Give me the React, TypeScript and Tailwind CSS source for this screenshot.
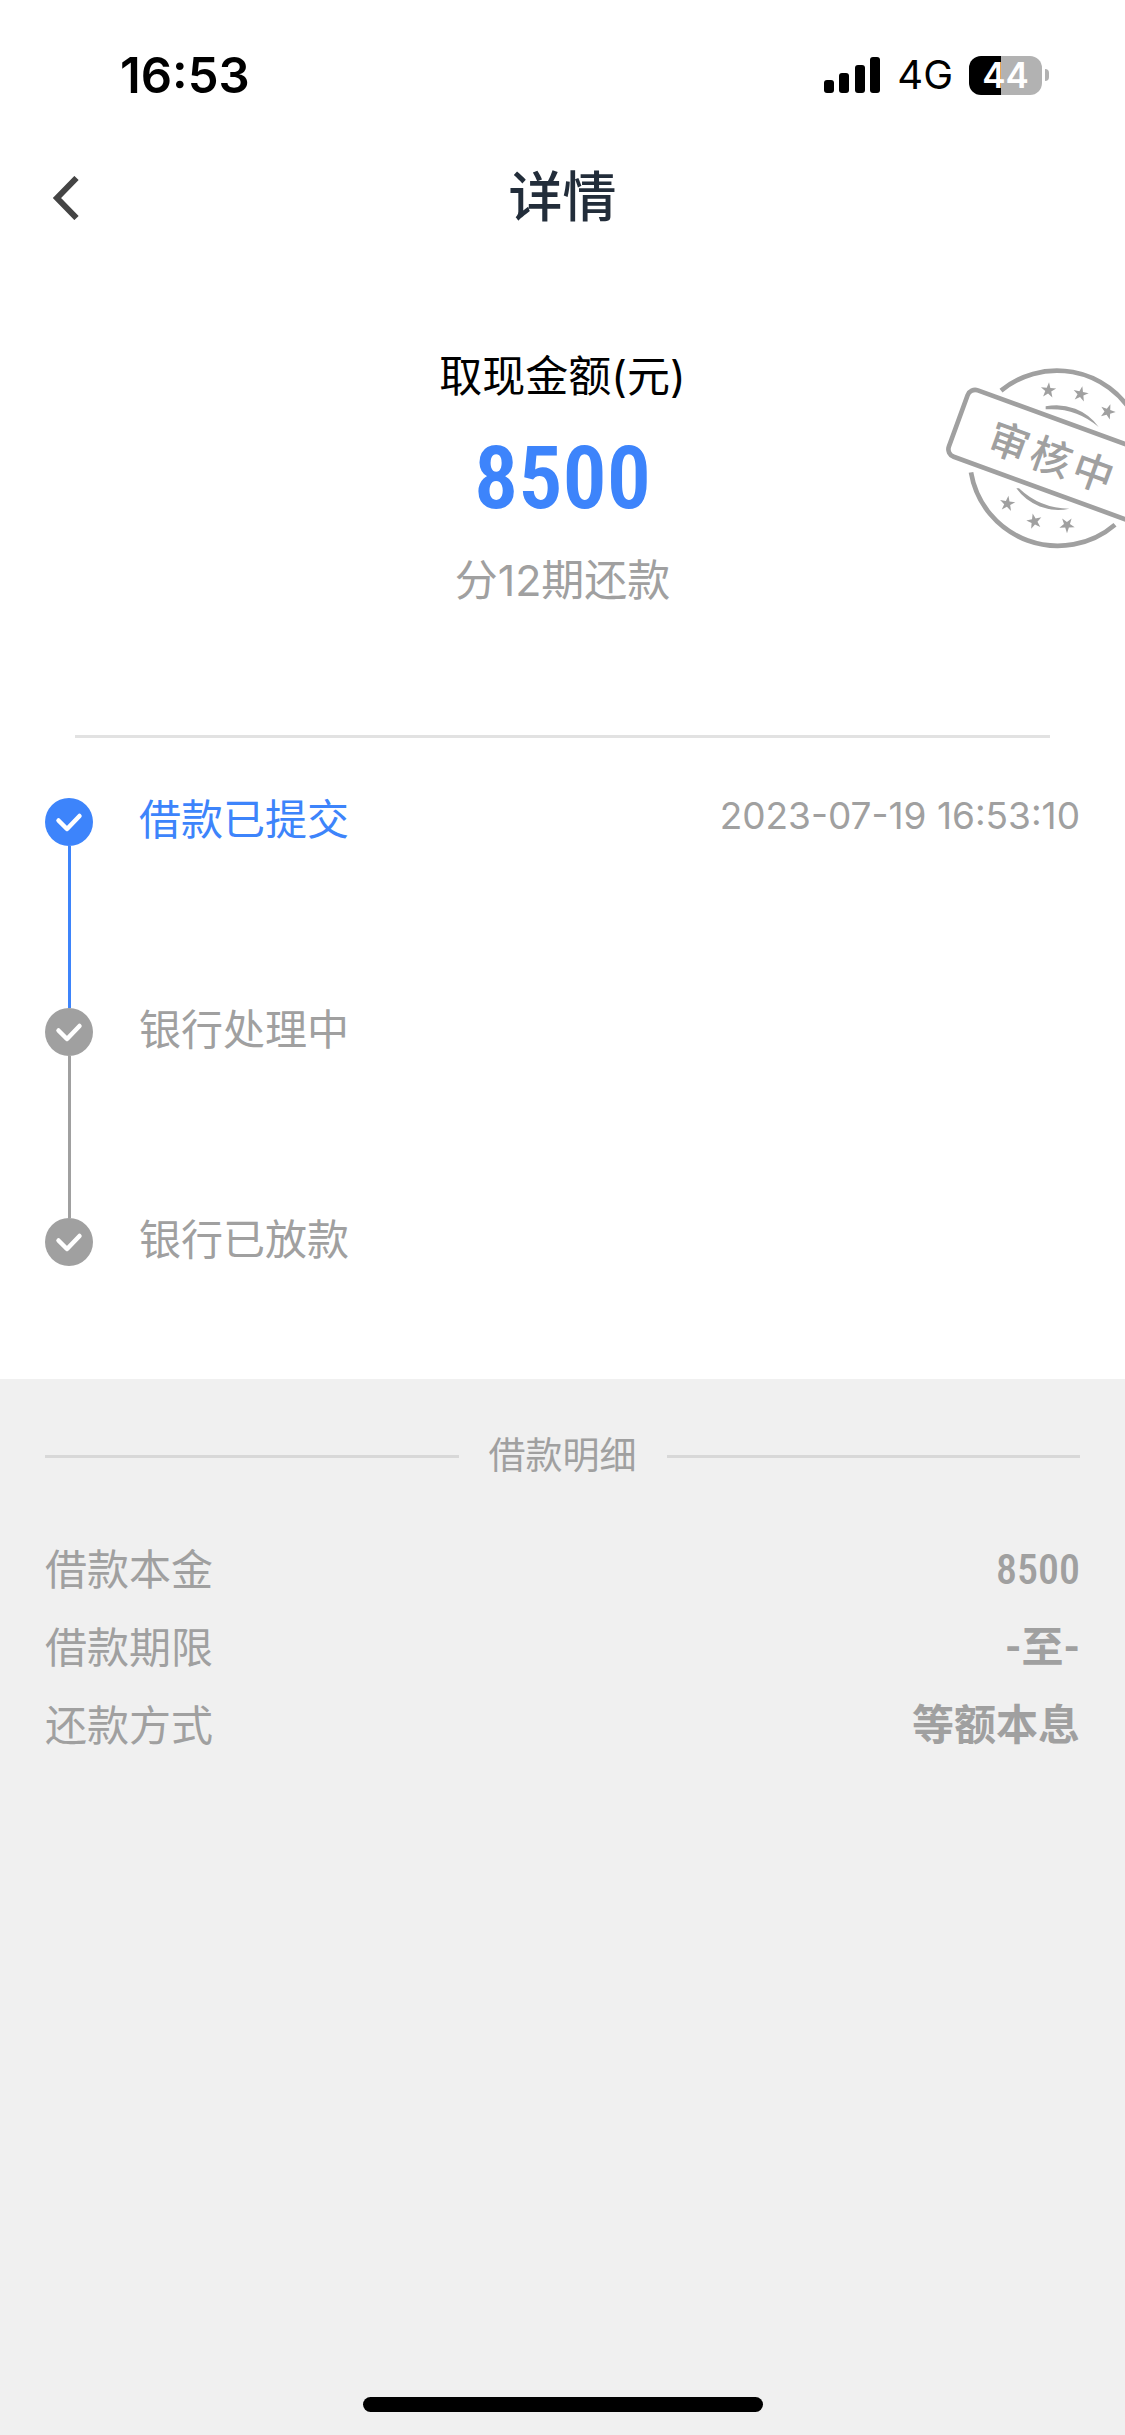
type Step = {
    id: number;
    title: string;
    time?: string;
    active: boolean;
};

type Detail = {
    label: string;
    value: string;
    numeric?: boolean;
};

const steps: Step[] = [
    { id: 1, title: "借款已提交", time: "2023-07-19 16:53:10", active: true },
    { id: 2, title: "银行处理中", active: false },
    { id: 3, title: "银行已放款", active: false },
];

const details: Detail[] = [
    { label: "借款本金", value: "8500", numeric: true },
    { label: "借款期限", value: "-至-" },
    { label: "还款方式", value: "等额本息" },
];

const stars = [
    { x: 370, y: 124, angle: 5 },
    { x: 467, y: 135, angle: 12 },
    { x: 548, y: 188, angle: 20 },
    { x: 247, y: 464, angle: 8 },
    { x: 328, y: 517, angle: -12 },
    { x: 426, y: 528, angle: 35 },
];

function StatusBar() {
    return (
        <div className="flex h-[150px] items-center justify-between pl-[120px] pr-[76px] text-black">
            <span className="text-[49px] font-semibold leading-none">16:53</span>

            <div className="flex items-center">
                <svg width="57" height="36" viewBox="0 0 57 36" aria-hidden="true">
                    <rect x="0" y="23" width="10" height="13" rx="3" />
                    <rect x="15" y="16" width="10" height="20" rx="3" />
                    <rect x="31" y="8" width="10" height="28" rx="3" />
                    <rect x="46" y="0" width="10" height="36" rx="3" />
                </svg>
                <span className="ml-4 text-[40px] leading-none">4G</span>

                {/* Battery */}
                <div className="ml-4 flex items-center gap-[3px]">
                    <div className="flex h-[39px] w-[73px] items-center justify-center rounded-xl bg-[linear-gradient(to_right,#000_44%,#b2b2b2_44%)] text-[35px] font-semibold leading-none text-white">
                        44
                    </div>
                    <div className="h-3 w-1 rounded-r-full bg-[#b2b2b2]" />
                </div>
            </div>
        </div>
    );
}

function NavBar() {
    return (
        <header className="grid h-24 grid-cols-[1fr_auto_1fr] items-center">
            <button type="button" aria-label="返回" className="w-24 pl-[52px]">
                <svg width="28" height="44" viewBox="0 0 28 44" fill="none" aria-hidden="true">
                    <path d="M24.500 2 5 22l19.500 20" stroke="#444" strokeWidth="6" />
                </svg>
            </button>
            <h1 className="text-[54px] font-medium leading-none text-[#222d3a]">详情</h1>
        </header>
    );
}

function ReviewStamp() {
    return (
        <svg
            className="absolute right-0 top-[103px]"
            width="200"
            height="220"
            viewBox="0 0 600 660"
            fill="none"
            stroke="#a0a0a0"
            strokeWidth="14"
            aria-label="审核中"
        >
            <path d="M228 125A264 264 0 0 1 625 198" />
            <path d="M138 370A264 264 0 0 0 570 527" />
            <rect
                width="700"
                height="212"
                rx="24"
                transform="translate(136 116) rotate(20)"
            />
            <g fill="#a0a0a0" stroke="none">
                <path d="M362 172A155 155 0 0 1 521 234A220 220 0 0 0 362 181Z" />
                <path d="M274 418A155 155 0 0 0 433 479A220 220 0 0 1 282 418Z" />
                {stars.map((star) => (
                    <path
                        key={star.x}
                        d="M0-24 5.500-7.500H23L9 3l5 17L0 9.500-14 20-9 3-23-7.500H-5.500Z"
                        transform={`translate(${star.x} ${star.y}) rotate(${star.angle})`}
                    />
                ))}
                <text
                    x="0 134 268"
                    y="0"
                    fontSize="122"
                    fontWeight="500"
                    transform="translate(180 300) rotate(20)"
                >
                    审核中
                </text>
            </g>
        </svg>
    );
}

function Summary() {
    return (
        <section className="relative flex flex-col items-center gap-6 overflow-hidden pb-[125px] pt-[100px]">
            <h2 className="text-[43px] leading-[60px] text-black">取现金额(元)</h2>
            <p className="font-['Roboto_Condensed','Roboto',sans-serif] text-[88px] font-semibold leading-[96px] text-[#3d84fb]">
                8500
            </p>
            <p className="text-[43px] leading-[60px] text-[#a0a0a0]">分12期还款</p>
            <ReviewStamp />
        </section>
    );
}

function StepIcon({ active }: { active: boolean }) {
    return (
        <svg
            className={active ? "shrink-0 text-[#3d84fb]" : "shrink-0 text-[#a0a0a0]"}
            width="48"
            height="48"
            viewBox="0 0 48 48"
            aria-hidden="true"
        >
            <circle cx="24" cy="24" r="24" fill="currentColor" />
            <path
                d="M13.500 22.500 22 31 34.500 18"
                fill="none"
                stroke="#fff"
                strokeWidth="4.500"
                strokeLinecap="round"
                strokeLinejoin="round"
            />
        </svg>
    );
}

function Timeline() {
    return (
        <ol className="px-[45px] pb-[113px] pt-[60px]">
            {steps.map((step) => (
                <li key={step.id} className="group flex h-[210px] items-start last:h-12">
                    <div className="flex h-full w-12 flex-col items-center">
                        <StepIcon active={step.active} />
                        <div
                            className={`w-[3px] flex-1 group-last:hidden ${
                                step.active ? "bg-[#3d84fb]" : "bg-[#a0a0a0]"
                            }`}
                        />
                    </div>
                    <h3
                        className={`ml-[46px] flex-1 text-[42px] leading-[44px] ${
                            step.active ? "text-[#3d84fb]" : "text-[#a0a0a0]"
                        }`}
                    >
                        {step.title}
                    </h3>
                    {step.time && (
                        <time className="text-[37px] leading-9 text-[#a0a0a0]">{step.time}</time>
                    )}
                </li>
            ))}
        </ol>
    );
}

function LoanDetails() {
    return (
        <section className="flex flex-1 flex-col bg-[#f0f0f0] px-[45px] pt-[49px] text-[#a0a0a0]">
            <div className="flex items-center gap-[30px]">
                <div className="h-[3px] flex-1 bg-[#d8d8d8]" />
                <h2 className="text-[37px] leading-[56px]">借款明细</h2>
                <div className="h-[3px] flex-1 bg-[#d8d8d8]" />
            </div>

            <dl className="mt-[47px]">
                {details.map((item) => (
                    <div key={item.label} className="flex items-center justify-between leading-[78px]">
                        <dt className="text-[42px]">{item.label}</dt>
                        <dd
                            className={
                                item.numeric
                                    ? "font-['Roboto_Condensed','Roboto',sans-serif] text-[42px] font-medium"
                                    : "font-['Roboto','Noto_Sans_CJK_SC',sans-serif] text-[42px] font-bold"
                            }
                        >
                            {item.value}
                        </dd>
                    </div>
                ))}
            </dl>

            {/* Home indicator */}
            <div className="mx-auto mb-[23px] mt-auto h-[15px] w-[400px] rounded-full bg-black" />
        </section>
    );
}

export default function App() {
    return (
        <main className="flex min-h-screen flex-col bg-white font-['Inter','Noto_Sans_CJK_SC',sans-serif]">
            <StatusBar />
            <NavBar />
            <Summary />
            <hr className="mx-[75px] border-t-[3px] border-[#e2e2e2]" />
            <Timeline />
            <LoanDetails />
        </main>
    );
}
